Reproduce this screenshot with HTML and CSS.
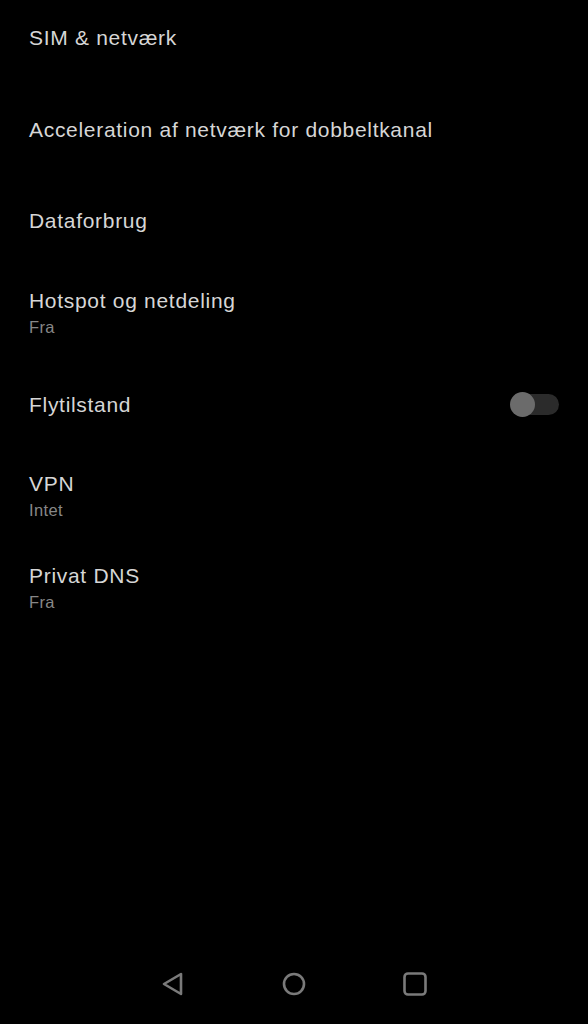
FILE: index.html
```html
<!DOCTYPE html>
<html lang="da">
<head>
  <meta charset="UTF-8" />
  <title>Netværk og internet</title>
  <link rel="stylesheet" href="styles.css">
</head>
<body>

<div class="list">
  <div class="row">
    <div class="title">SIM &amp; netværk</div>
  </div>
  <div class="row">
    <div class="title">Acceleration af netværk for dobbeltkanal</div>
  </div>
  <div class="row">
    <div class="title">Dataforbrug</div>
  </div>
  <div class="row">
    <div class="title">Hotspot og netdeling</div>
    <div class="summary">Fra</div>
  </div>
  <div class="row switch-row">
    <div class="title">Flytilstand</div>
    <div class="switch"><div class="thumb"></div></div>
  </div>
  <div class="row">
    <div class="title">VPN</div>
    <div class="summary">Intet</div>
  </div>
  <div class="row">
    <div class="title">Privat DNS</div>
    <div class="summary">Fra</div>
  </div>
</div>

<div class="navbar">
  <svg class="nav-icon" width="26" height="26" viewBox="0 0 26 26">
    <path d="M21 3 L21 23 L4 13 Z" fill="none" stroke="#7a7a7a" stroke-width="2.6" stroke-linejoin="round"/>
  </svg>
  <svg class="nav-icon" width="26" height="26" viewBox="0 0 26 26">
    <circle cx="13" cy="13" r="10" fill="none" stroke="#7a7a7a" stroke-width="2.6"/>
  </svg>
  <svg class="nav-icon" width="26" height="26" viewBox="0 0 26 26">
    <rect x="2.5" y="2.5" width="21" height="21" rx="3.5" fill="none" stroke="#7a7a7a" stroke-width="2.6"/>
  </svg>
</div>

</body>
</html>
```

FILE: styles.css
```css
html, body {
  margin: 0;
  padding: 0;
  background: #000;
  height: 100%;
}
body {
  font-family: "Liberation Sans", Arial, sans-serif;
  color: #d6d6d6;
  position: relative;
  overflow: hidden;
}
.list {
  margin-top: -8px;
}
.row {
  height: 91.7px;
  padding: 0 29px;
  display: flex;
  flex-direction: column;
  justify-content: center;
}
.title {
  font-size: 21px;
  letter-spacing: 0.7px;
  line-height: 26px;
}
.summary {
  font-size: 16.5px;
  letter-spacing: 0.4px;
  color: #878787;
  line-height: 22px;
  margin-top: 2px;
}
.switch-row {
  flex-direction: row;
  align-items: center;
  justify-content: space-between;
}
.switch {
  position: relative;
  width: 47px;
  height: 21px;
  border-radius: 11px;
  background: #2b2b2b;
}
.thumb {
  position: absolute;
  left: -2px;
  top: -2px;
  width: 25px;
  height: 25px;
  border-radius: 50%;
  background: #6b6b6b;
}
.navbar {
  position: absolute;
  left: 0;
  right: 0;
  bottom: 27px;
  display: flex;
  justify-content: center;
  gap: 95px;
}
.nav-icon {
  display: block;
}
```
